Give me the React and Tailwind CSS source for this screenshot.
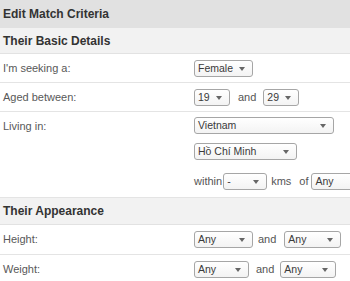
import React from "react";

function Select({ value, width }) {
  return (
    <div
      className="relative flex items-center h-[17px] shrink-0 border border-[#a6a6a6] rounded-[3px] bg-gradient-to-b from-white to-[#f3f3f3] pl-[3px] text-[10.5px] text-[#3a3a3a] leading-none"
      style={{ width }}
    >
      <span>{value}</span>
      <span className="absolute right-[7px] top-[6px] w-0 h-0 border-l-[3.5px] border-r-[3.5px] border-t-[4px] border-l-transparent border-r-transparent border-t-[#666]"></span>
    </div>
  );
}

function Row({ label, children, className = "", labelClass = "" }) {
  return (
    <div className={`flex border-b border-[#e4e4e4] ${className}`}>
      <div className={`w-[194px] shrink-0 pl-[3px] text-[11px] text-[#585858] ${labelClass}`}>{label}</div>
      <div className="flex-1">{children}</div>
    </div>
  );
}

export default function App() {
  return (
    <div className="w-[350px] h-[281px] overflow-hidden bg-white font-['Liberation_Sans',Arial,sans-serif]">
      <div className="h-[28px] bg-[#e1e1e1] pl-[3px] flex items-center font-bold text-[12px] text-[#333]">
        Edit Match Criteria
      </div>
      <div className="h-[26px] bg-[#f2f2f2] border-b border-[#e2e2e2] pl-[3px] flex items-center font-bold text-[12px] text-[#333]">
        Their Basic Details
      </div>

      <Row label="I'm seeking a:" className="h-[29px] items-center">
        <Select value="Female" width={59} />
      </Row>

      <Row label="Aged between:" className="h-[29px] items-center">
        <div className="flex items-center">
          <Select value="19" width={36} />
          <span className="ml-[8px] mr-[7px] text-[11px] text-[#555]">and</span>
          <Select value="29" width={36} />
        </div>
      </Row>

      <Row label="Living in:" className="h-[86px]" labelClass="pt-[6px]">
        <div className="pt-[5px] flex flex-col">
          <Select value="Vietnam" width={140} />
          <div className="mt-[9px]">
            <Select value="Hồ Chí Minh" width={103} />
          </div>
          <div className="mt-[13px] flex items-center text-[11px] text-[#555] whitespace-nowrap">
            <span className="mr-[1px]">within</span>
            <Select value="-" width={44} />
            <span className="ml-[4px]">kms</span>
            <span className="ml-[8px] mr-[3px]">of</span>
            <Select value="Any" width={60} />
          </div>
        </div>
      </Row>

      <div className="h-[27px] bg-[#f2f2f2] border-b border-[#e2e2e2] pl-[3px] flex items-center font-bold text-[12px] text-[#333]">
        Their Appearance
      </div>

      <Row label="Height:" className="h-[30px] items-center">
        <div className="flex items-center">
          <Select value="Any" width={59} />
          <span className="ml-[5px] mr-[8px] text-[11px] text-[#555]">and</span>
          <Select value="Any" width={57} />
        </div>
      </Row>

      <Row label="Weight:" className="h-[30px] items-center">
        <div className="flex items-center">
          <Select value="Any" width={55} />
          <span className="ml-[7px] mr-[6px] text-[11px] text-[#555]">and</span>
          <Select value="Any" width={56} />
        </div>
      </Row>
    </div>
  );
}
